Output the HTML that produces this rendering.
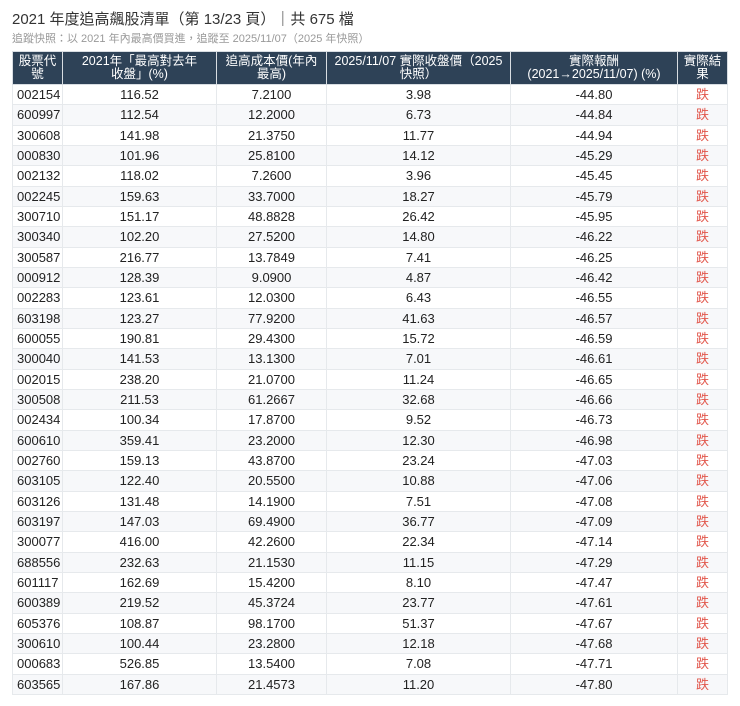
<!DOCTYPE html>
<html><head><meta charset="utf-8"><style>
body{margin:0;background:#fff;font-family:"Liberation Sans","Noto Sans CJK TC",sans-serif;color:#222;}
.t{position:absolute;left:12px;top:8px;font-size:15px;color:#333;white-space:nowrap;}
.s{position:absolute;left:12px;top:30px;font-size:11px;color:#999;white-space:nowrap;}
table{position:absolute;left:12px;top:51px;border-collapse:collapse;width:715px;table-layout:fixed;font-size:13px;}
th{background:#2e4257;color:#fff;font-weight:normal;font-size:12.5px;line-height:13px;height:32px;padding:0 10px;border:1px solid #d8dde2;text-align:center;}
td{height:19.33px;padding:0 4px;border:1px solid #e6e9ec;text-align:center;line-height:19px;}
td:first-child{text-align:left;}
tr:nth-child(even) td{background:#f7f8fa;}
.r{color:#e2574c;}
</style></head><body>
<div class="t">2021 年度追高飆股清單（第 13/23 頁）｜共 675 檔</div>
<div class="s">追蹤快照：以 2021 年內最高價買進，追蹤至 2025/11/07（2025 年快照）</div>
<table>
<colgroup><col style="width:50px"><col style="width:154px"><col style="width:110px"><col style="width:184px"><col style="width:167px"><col style="width:50px"></colgroup>
<thead><tr><th style="padding:0 4px">股票代號</th><th style="padding:0 14px">2021年「最高對去年收盤」(%)</th><th style="padding:0 8px">追高成本價(年內最高)</th><th style="padding:0 6px">2025/11/07 實際收盤價（2025 快照）</th><th style="padding:0 4px">實際報酬<br>(2021→2025/11/07) (%)</th><th style="padding:0 4px">實際結果</th></tr></thead>
<tbody>
<tr><td>002154</td><td>116.52</td><td>7.2100</td><td>3.98</td><td>-44.80</td><td class="r">跌</td></tr>
<tr><td>600997</td><td>112.54</td><td>12.2000</td><td>6.73</td><td>-44.84</td><td class="r">跌</td></tr>
<tr><td>300608</td><td>141.98</td><td>21.3750</td><td>11.77</td><td>-44.94</td><td class="r">跌</td></tr>
<tr><td>000830</td><td>101.96</td><td>25.8100</td><td>14.12</td><td>-45.29</td><td class="r">跌</td></tr>
<tr><td>002132</td><td>118.02</td><td>7.2600</td><td>3.96</td><td>-45.45</td><td class="r">跌</td></tr>
<tr><td>002245</td><td>159.63</td><td>33.7000</td><td>18.27</td><td>-45.79</td><td class="r">跌</td></tr>
<tr><td>300710</td><td>151.17</td><td>48.8828</td><td>26.42</td><td>-45.95</td><td class="r">跌</td></tr>
<tr><td>300340</td><td>102.20</td><td>27.5200</td><td>14.80</td><td>-46.22</td><td class="r">跌</td></tr>
<tr><td>300587</td><td>216.77</td><td>13.7849</td><td>7.41</td><td>-46.25</td><td class="r">跌</td></tr>
<tr><td>000912</td><td>128.39</td><td>9.0900</td><td>4.87</td><td>-46.42</td><td class="r">跌</td></tr>
<tr><td>002283</td><td>123.61</td><td>12.0300</td><td>6.43</td><td>-46.55</td><td class="r">跌</td></tr>
<tr><td>603198</td><td>123.27</td><td>77.9200</td><td>41.63</td><td>-46.57</td><td class="r">跌</td></tr>
<tr><td>600055</td><td>190.81</td><td>29.4300</td><td>15.72</td><td>-46.59</td><td class="r">跌</td></tr>
<tr><td>300040</td><td>141.53</td><td>13.1300</td><td>7.01</td><td>-46.61</td><td class="r">跌</td></tr>
<tr><td>002015</td><td>238.20</td><td>21.0700</td><td>11.24</td><td>-46.65</td><td class="r">跌</td></tr>
<tr><td>300508</td><td>211.53</td><td>61.2667</td><td>32.68</td><td>-46.66</td><td class="r">跌</td></tr>
<tr><td>002434</td><td>100.34</td><td>17.8700</td><td>9.52</td><td>-46.73</td><td class="r">跌</td></tr>
<tr><td>600610</td><td>359.41</td><td>23.2000</td><td>12.30</td><td>-46.98</td><td class="r">跌</td></tr>
<tr><td>002760</td><td>159.13</td><td>43.8700</td><td>23.24</td><td>-47.03</td><td class="r">跌</td></tr>
<tr><td>603105</td><td>122.40</td><td>20.5500</td><td>10.88</td><td>-47.06</td><td class="r">跌</td></tr>
<tr><td>603126</td><td>131.48</td><td>14.1900</td><td>7.51</td><td>-47.08</td><td class="r">跌</td></tr>
<tr><td>603197</td><td>147.03</td><td>69.4900</td><td>36.77</td><td>-47.09</td><td class="r">跌</td></tr>
<tr><td>300077</td><td>416.00</td><td>42.2600</td><td>22.34</td><td>-47.14</td><td class="r">跌</td></tr>
<tr><td>688556</td><td>232.63</td><td>21.1530</td><td>11.15</td><td>-47.29</td><td class="r">跌</td></tr>
<tr><td>601117</td><td>162.69</td><td>15.4200</td><td>8.10</td><td>-47.47</td><td class="r">跌</td></tr>
<tr><td>600389</td><td>219.52</td><td>45.3724</td><td>23.77</td><td>-47.61</td><td class="r">跌</td></tr>
<tr><td>605376</td><td>108.87</td><td>98.1700</td><td>51.37</td><td>-47.67</td><td class="r">跌</td></tr>
<tr><td>300610</td><td>100.44</td><td>23.2800</td><td>12.18</td><td>-47.68</td><td class="r">跌</td></tr>
<tr><td>000683</td><td>526.85</td><td>13.5400</td><td>7.08</td><td>-47.71</td><td class="r">跌</td></tr>
<tr><td>603565</td><td>167.86</td><td>21.4573</td><td>11.20</td><td>-47.80</td><td class="r">跌</td></tr>
</tbody></table>
</body></html>
